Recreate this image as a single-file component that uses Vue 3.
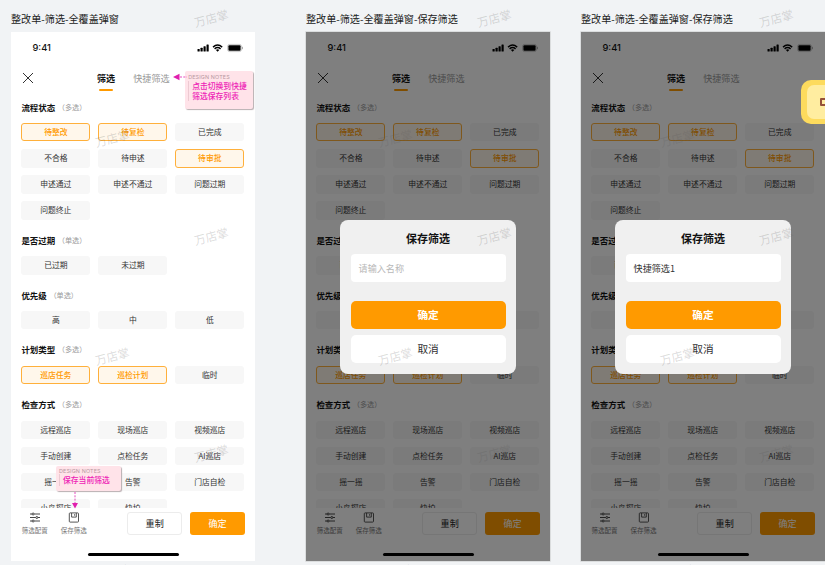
<script setup>
const sections = [
  { title: '流程状态', hint: '（多选）', items: ['待整改', '待复检', '已完成', '不合格', '待申述', '待审批', '申述通过', '申述不通过', '问题过期', '问题终止'] },
  { title: '是否过期', hint: '（单选）', items: ['已过期', '未过期'] },
  { title: '优先级', hint: '（单选）', items: ['高', '中', '低'] },
  { title: '计划类型', hint: '（多选）', items: ['巡店任务', '巡检计划', '临时'] },
  { title: '检查方式', hint: '（多选）', items: ['远程巡店', '现场巡店', '视频巡店', '手动创建', '点检任务', 'AI巡店', '摇一摇', '告警', '门店自检', '小鸟探店', '快拍'] },
]
const selected = ['待整改', '待复检', '待审批', '巡店任务', '巡检计划']

const boards = [
  { name: '整改单-筛选-全覆盖弹窗', notes: true },
  { name: '整改单-筛选-全覆盖弹窗-保存筛选', modal: true, value: '' },
  { name: '整改单-筛选-全覆盖弹窗-保存筛选', modal: true, value: '快捷筛选1' },
]

const marks = []
for (let c = 0; c < 3; c++) {
  for (let r = 0; r < 3; r++) {
    marks.push({ x: 211 + c * 282.5, y: 18 + r * 217.5 })
    marks.push({ x: 112 + c * 282.5, y: 138 + r * 217.5 })
  }
}
</script>

<template>
  <div class="canvas">
    <div v-for="(b, i) in boards" :key="i" class="board">
      <div class="board-name">{{ b.name }}</div>
      <div class="phone" :class="{ dimmed: b.modal }">
        <div class="status">
          <span class="clock">9:41</span>
          <svg class="signals" width="46" height="10" viewBox="0 0 46 10">
            <rect x="0.5" y="6" width="2.2" height="2.6" rx=".5" />
            <rect x="3.5" y="4.8" width="2.2" height="3.8" rx=".5" />
            <rect x="6.5" y="3.2" width="2.2" height="5.4" rx=".5" />
            <rect x="9.5" y="1.4" width="2.2" height="7.2" rx=".5" />
            <path d="M16 4.1Q20.6 .1 25.2 4.1M17.6 5.9Q20.6 3.3 23.6 5.9" fill="none" stroke="#000" stroke-width="1.4" />
            <path d="M18.9 7Q20.6 5.7 22.3 7L20.6 8.8Z" />
            <rect x="30.6" y="1.4" width="13.8" height="7.2" rx="2" fill="none" stroke="#000" stroke-opacity=".35" stroke-width=".6" />
            <rect x="31.4" y="2.2" width="12.2" height="5.6" rx="1" />
            <rect x="45" y="3.8" width=".8" height="2.4" opacity=".4" />
          </svg>
        </div>
        <div class="nav">
          <svg class="close" width="12" height="12" viewBox="0 0 12 12"><path d="M1 1L11 11M11 1L1 11" fill="none" stroke="#333" stroke-width="1" /></svg>
          <div class="tab active">筛选</div>
          <div class="tab">快捷筛选</div>
        </div>
        <div class="body">
          <section v-for="s in sections" :key="s.title">
            <div class="head"><b>{{ s.title }}</b><span>{{ s.hint }}</span></div>
            <div class="chips">
              <div v-for="t in s.items" :key="t" class="chip" :class="{ on: selected.includes(t) }">{{ t }}</div>
            </div>
          </section>
        </div>
        <div class="footer">
          <div class="tool">
            <svg width="12" height="11" viewBox="0 0 12 11" fill="none" stroke="#333" stroke-width=".9">
              <path d="M1 2H3M5.2 2H11M1 5.5H6.7M8.9 5.5H11M1 9H3M5.2 9H11" />
              <circle cx="4.1" cy="2" r="1" /><circle cx="7.8" cy="5.5" r="1" /><circle cx="4.1" cy="9" r="1" />
            </svg>
            <span>筛选配置</span>
          </div>
          <div class="tool">
            <svg width="12" height="11" viewBox="0 0 12 11" fill="none" stroke="#444" stroke-width=".9">
              <rect x="1.3" y=".9" width="9.2" height="9.2" rx=".8" />
              <path d="M3.6 1V5.1H8.3V1M6.6 2.2V3.7" />
            </svg>
            <span>保存筛选</span>
          </div>
          <div class="btn reset">重制</div>
          <div class="btn ok">确定</div>
        </div>
        <div class="home"></div>

        <div v-if="b.modal" class="mask">
          <div class="modal">
            <div class="modal-title">保存筛选</div>
            <div class="field" :class="{ empty: !b.value }">{{ b.value || '请输入名称' }}</div>
            <div class="m-btn primary">确定</div>
            <div class="m-btn">取消</div>
          </div>
        </div>

        <template v-if="b.notes">
          <div class="note note-a">
            <div class="note-label">DESIGN NOTES</div>
            <div class="note-text">点击切换到快捷<br>筛选保存列表</div>
          </div>
          <svg class="arrow-a" width="14" height="8" viewBox="0 0 14 8"><path d="M0 4L6.5 .8V7.2Z" fill="#e01fae" /><path d="M7 4H14" stroke="#e01fae" stroke-width=".8" stroke-dasharray="2 1.3" /></svg>
          <div class="note note-b">
            <div class="note-label">DESIGN NOTES</div>
            <div class="note-text">保存当前筛选</div>
          </div>
          <svg class="arrow-b" width="8" height="17" viewBox="0 0 8 17"><path d="M4 0V11" stroke="#e01fae" stroke-width=".8" stroke-dasharray="2 1.3" /><path d="M4 16.6L1 11H7Z" fill="#e01fae" /></svg>
        </template>
      </div>
    </div>

    <div v-for="(m, i) in marks" :key="'m' + i" class="mark" :style="{ left: m.x + 'px', top: m.y + 'px' }">万店掌</div>
    <div class="sticker"><div class="sticker-in"><i></i></div></div>
  </div>
</template>

<style>
body { overflow: hidden; }
</style>

<style scoped>
.canvas, .canvas * { box-sizing: border-box; }
.canvas {
  position: relative;
  width: 825px;
  height: 565px;
  overflow: hidden;
  padding-left: 11px;
  display: flex;
  gap: 30.8px;
  background: #f1f3f5;
  font-family: "Noto Sans CJK SC", sans-serif;
  color: #333;
}
.board { flex: none; width: 244.2px; }
.board:first-child { margin-right: 20px; }
.board-name {
  height: 32px;
  padding-top: 10px;
  line-height: 18px;
  font-size: 10.1px;
  color: #222;
  white-space: nowrap;
}
.phone {
  position: relative;
  height: 529px;
  background: #fff;
  display: flex;
  flex-direction: column;
}
.phone.dimmed { box-shadow: 0 0 0 .7px #d2d3d4; }
.status {
  height: 31px;
  flex: none;
  display: flex;
  justify-content: space-between;
  align-items: center;
  padding: 0 12px 0 21.5px;
}
.clock { font: 500 9.3px/31px Inter, sans-serif; color: #111; }
.signals { margin-top: 1px; }
.nav {
  height: 34.6px;
  flex: none;
  display: flex;
  align-items: flex-start;
  padding: 5px 0 0 10.8px;
}
.close { margin: 4px 63.2px 0 0; }
.tab {
  position: relative;
  height: 23px;
  line-height: 20px;
  font-size: 9.1px;
  color: #999;
  margin-right: 18px;
}
.tab.active { color: #111; font-weight: 700; }
.tab.active::after {
  content: '';
  position: absolute;
  left: 2.4px;
  bottom: 0;
  width: 13.3px;
  height: 1.6px;
  border-radius: 1px;
  background: #ff9a00;
}
.body { height: 410.4px; flex: none; overflow: hidden; padding: 0 10.4px; }
section { padding-bottom: 11px; }
.head { height: 20px; line-height: 19.6px; font-size: 8.45px; color: #111; display: flex; }
.head span { font-size: 7.15px; color: #999; margin-left: 2.7px; }
.chips {
  margin-top: 5.6px;
  display: grid;
  grid-template-columns: repeat(3, 68.9px);
  column-gap: 8.1px;
  row-gap: 7.75px;
}
.chip {
  height: 18.3px;
  line-height: 18px;
  border-radius: 3px;
  background: #f7f7f7;
  font-size: 7.8px;
  color: #333;
  text-align: center;
}
.chip.on {
  background: #fff7eb;
  border: 1px solid #ffb03b;
  line-height: 16px;
  color: #ff9a00;
  font-weight: 500;
}
.footer {
  height: 40px;
  flex: none;
  display: flex;
  align-items: flex-start;
  padding: 4px 10.2px 0 10.4px;
}
.tool {
  width: 26.5px;
  margin-right: 12.5px;
  display: flex;
  flex-direction: column;
  align-items: center;
  font-size: 6.5px;
  line-height: 14px;
  color: #777;
  white-space: nowrap;
}
.tool svg { flex: none; }
.btn {
  height: 23px;
  line-height: 22px;
  border-radius: 3px;
  font-size: 9.1px;
  text-align: center;
}
.reset { width: 54.6px; margin-left: auto; border: 1px solid #ececec; line-height: 21px; color: #222; }
.ok { width: 54.8px; margin-left: 8.2px; background: #ff9a00; color: #fff; }
.home {
  flex: none;
  width: 91px;
  height: 3.4px;
  border-radius: 2px;
  background: #000;
  margin: 4.6px auto 0;
}
.mask {
  position: absolute;
  inset: 0;
  background: rgba(0, 0, 0, .5);
  display: flex;
  flex-direction: column;
  align-items: center;
  padding-top: 188px;
}
.modal {
  width: 175.6px;
  height: 153.6px;
  padding: 0 10.3px;
  border-radius: 8px;
  background: #f0f0f0;
}
.modal-title { height: 33.7px; line-height: 36px; font-size: 11px; font-weight: 700; text-align: center; color: #111; }
.field {
  height: 28.4px;
  line-height: 28px;
  margin-bottom: 18.6px;
  padding-left: 8px;
  border-radius: 4px;
  background: #fff;
  font-size: 9.1px;
  color: #333;
}
.field.empty { color: #b8b8b8; }
.m-btn {
  height: 28.4px;
  line-height: 28px;
  margin-bottom: 5.8px;
  border-radius: 5px;
  background: #fff;
  text-align: center;
  font-size: 10.7px;
  color: #333;
}
.m-btn.primary { background: #ff9a00; color: #fff; font-weight: 700; }
.note {
  position: absolute;
  padding: 2.6px 3px;
  border-radius: 2px;
  background: #ffe3e9;
  box-shadow: 1px 1px 1px #b9aeb1;
}
.note-a { left: 174.2px; top: 39px; width: 68.3px; height: 38.4px; }
.note-b { left: 45px; top: 433.6px; width: 64.8px; height: 25.8px; }
.note-label { font: 5.4px/6px Inter, sans-serif; letter-spacing: .15px; color: #b8989f; white-space: nowrap; }
.note-text {
  margin-top: 1px;
  padding-left: 3px;
  border-left: 1px solid #eccad2;
  font-size: 7.8px;
  line-height: 10.4px;
  font-weight: 500;
  color: #ee22b6;
  white-space: nowrap;
}
.note-b .note-text { line-height: 12px; margin-top: 0; }
.arrow-a { position: absolute; left: 161.5px; top: 41.4px; }
.arrow-b { position: absolute; left: 59.5px; top: 460px; }
.sticker {
  position: absolute;
  left: 801px;
  top: 80px;
  width: 60px;
  height: 44px;
  padding: 5px 6px;
  border-radius: 10px;
  background: #fddb5d;
}
.sticker-in { height: 34px; border-radius: 7px; background: #ffeda0; padding: 12.5px 0 0 12.5px; }
.sticker-in i { display: block; width: 10px; height: 8px; border: 2px solid #955139; border-radius: 1px; }
.mark {
  position: absolute;
  transform: translate(-50%, -50%) rotate(-15deg);
  font-size: 11.6px;
  line-height: 14px;
  white-space: nowrap;
  color: rgba(90, 90, 90, .22);
}
</style>
